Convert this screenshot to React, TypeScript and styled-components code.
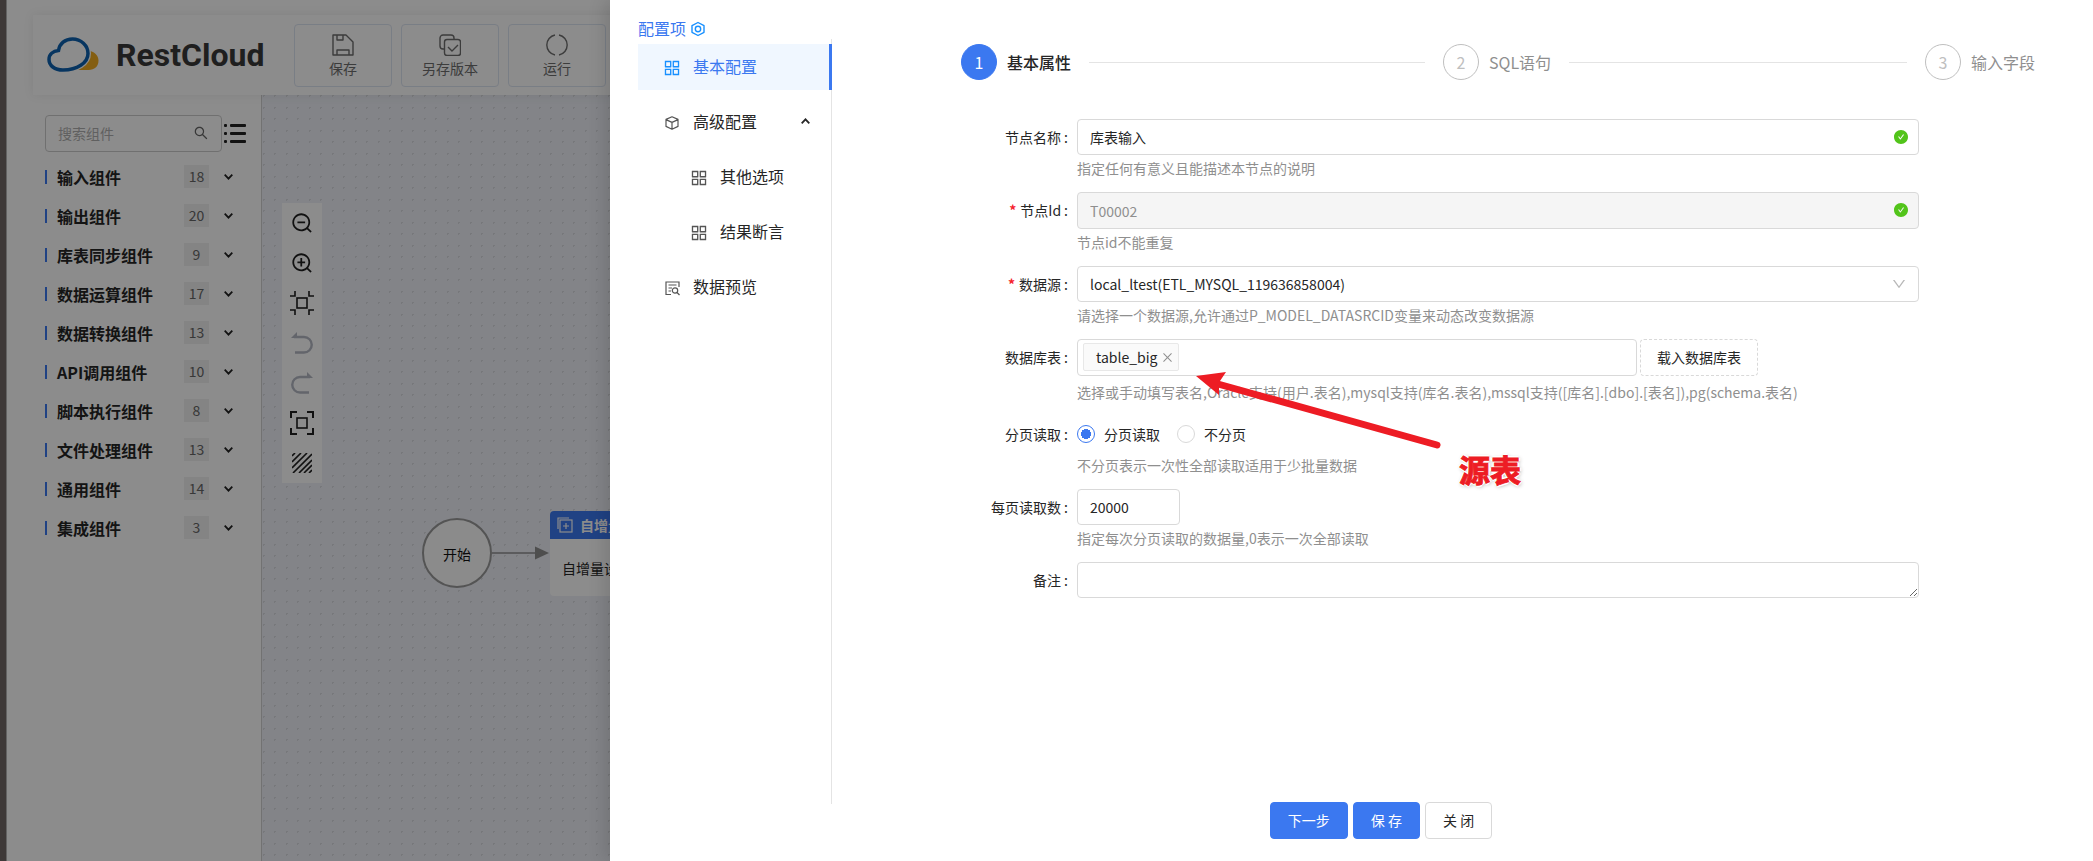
import React from "react";
import styled, { createGlobalStyle, css } from "styled-components";
import {
  AiFillCheckCircle,
  AiOutlineAppstore,
  AiOutlineClose,
  AiOutlineDown,
  AiOutlineSearch,
  AiOutlineZoomIn,
  AiOutlineZoomOut,
} from "react-icons/ai";

const primary = "#3b78f0";
const border = "#d9d9d9";
const text = "#262626";
const muted = "#8f8f8f";

const GlobalStyle = createGlobalStyle`
  *, *::before, *::after { box-sizing: border-box; }
  body {
    margin: 0;
    color: ${text};
    background: #fff;
    font-family: "Noto Sans CJK SC", "Noto Sans", sans-serif;
    font-size: 14px;
    line-height: 22px;
  }
  button, input, select, textarea { font: inherit; color: inherit; margin: 0; }
  button { cursor: pointer; }
  svg { display: block; flex: none; }
`;

/* ---------- Editor behind the drawer ---------- */

const Screen = styled.div`
  position: relative;
  display: flex;
  height: 100vh;
  overflow: hidden;
`;

const Edge = styled.div`
  flex: none;
  width: 6px;
  background: #716866;
`;

const Editor = styled.div`
  flex: 1;
  min-width: 0;
  display: flex;
  flex-direction: column;
  padding-top: 15px;
  border-left: 1px solid #b4b4b4;
  isolation: isolate;
`;

const Header = styled.header`
  position: relative;
  z-index: 1;
  display: flex;
  align-items: center;
  height: 80px;
  margin-left: 26px;
  padding-left: 14px;
  background: #fff;
  box-shadow: 0 0 10px rgba(0, 0, 0, 0.08);
`;

const Brand = styled.div`
  display: flex;
  align-items: center;
  gap: 17px;
  width: 247px;
  color: #3a3a3a;
  font: bold 32px/40px Roboto, "Noto Sans", sans-serif;
`;

const HeaderActions = styled.div`
  display: flex;
  gap: 9px;
`;

const HeaderButton = styled.button`
  display: flex;
  flex-direction: column;
  align-items: center;
  gap: 1px;
  width: 98px;
  height: 63px;
  padding: 9px 0 0;
  color: #6e6e6e;
  background: #fff;
  border: 1px solid #dde5f2;
  border-radius: 4px;
`;

const Workspace = styled.div`
  flex: 1;
  min-height: 0;
  display: flex;
`;

const Palette = styled.aside`
  flex: none;
  width: 255px;
  padding: 20px 15px 0 38px;
  border-right: 1px solid #d0d0d0;
`;

const SearchRow = styled.div`
  display: flex;
  align-items: center;
  gap: 2px;
  margin-bottom: 5px;
`;

const SearchBox = styled.label`
  display: flex;
  align-items: center;
  width: 177px;
  height: 37px;
  padding: 0 12px 2px;
  color: #666;
  border: 1px solid #ccc;
  border-radius: 4px;
`;

const SearchInput = styled.input`
  flex: 1;
  min-width: 0;
  padding: 0;
  border: 0;
  outline: 0;
  background: none;
  &::placeholder { color: #b0b0b0; opacity: 1; }
`;

const IconButton = styled.button`
  display: flex;
  padding: 0;
  color: #222;
  background: none;
  border: 0;
`;

const Groups = styled.ul`
  margin: 0;
  padding: 0 13px 0 0;
  list-style: none;
`;

const Group = styled.li`
  display: flex;
  align-items: center;
  height: 39px;
  font-size: 16px;
  font-weight: bold;
  &::before {
    content: "";
    width: 2px;
    height: 14px;
    margin-right: 10px;
    background: ${primary};
  }
`;

const GroupName = styled.span`
  flex: 1;
`;

const Count = styled.span`
  width: 25px;
  height: 23px;
  margin-right: 15px;
  color: #666;
  background: #f0f0f0;
  font-size: 14px;
  font-weight: normal;
  line-height: 23px;
  text-align: center;
`;

const Canvas = styled.div`
  position: relative;
  flex: 1;
  overflow: hidden;
  background-color: #eef0f7;
  background-image: radial-gradient(circle, #d9dbe0 1px, transparent 1px),
    radial-gradient(circle, #d9dbe0 1px, transparent 1px),
    radial-gradient(circle, #d9dbe0 1px, transparent 1px),
    radial-gradient(circle, #d9dbe0 1px, transparent 1px);
  background-size: 23px 23px;
  background-position: -10px 1px, 1px 1px, -10px 12px, 1px 12px;
`;

const Tools = styled.div`
  position: absolute;
  left: 20px;
  top: 108px;
  display: flex;
  flex-direction: column;
  width: 40px;
  background: #fff;
`;

const Tool = styled.button<{ $off?: boolean }>`
  display: flex;
  align-items: center;
  justify-content: center;
  height: 40px;
  padding: 0;
  color: ${(p) => (p.$off ? "#b4b8c4" : "#1f1f1f")};
  background: none;
  border: 0;
`;

const StartNode = styled.div`
  position: absolute;
  left: 160px;
  top: 423px;
  width: 70px;
  height: 70px;
  color: #111;
  background: #fdfdfd;
  border: 2px solid #999;
  border-radius: 50%;
  line-height: 68px;
  text-align: center;
`;

const Connector = styled.svg`
  position: absolute;
  left: 230px;
  top: 450px;
`;

const TaskNode = styled.div`
  position: absolute;
  left: 288px;
  top: 416px;
  width: 190px;
  background: #fff;
  border-radius: 4px;
  overflow: hidden;
`;

const TaskTitle = styled.div`
  display: flex;
  align-items: center;
  gap: 7px;
  height: 28px;
  padding-left: 7px;
  color: #fff;
  background: ${primary};
  font-weight: bold;
`;

const TaskText = styled.div`
  padding: 18px 12px 17px;
`;

const Mask = styled.div`
  position: absolute;
  inset: 0;
  background: rgba(0, 0, 0, 0.45);
`;

/* ---------- Drawer ---------- */

const Drawer = styled.section`
  position: absolute;
  inset: 0 0 0 610px;
  display: flex;
  background: #fff;
  box-shadow: -6px 0 16px rgba(0, 0, 0, 0.12);
`;

const Side = styled.nav`
  flex: none;
  display: flex;
  flex-direction: column;
  width: 222px;
  padding: 16px 0 57px 28px;
`;

const SideTitle = styled.div`
  display: flex;
  align-items: center;
  gap: 5px;
  height: 23px;
  color: ${primary};
  font-size: 16px;
`;

const Menu = styled.div`
  flex: 1;
  display: flex;
  flex-direction: column;
  gap: 9px;
  padding-top: 5px;
  border-right: 1px solid #e4e4e4;
`;

const MenuItem = styled.button<{ $active?: boolean; $sub?: boolean }>`
  display: flex;
  align-items: center;
  gap: 11px;
  height: 46px;
  margin-right: -1px;
  padding: 0 22px 2px ${(p) => (p.$sub ? 51 : 24)}px;
  background: none;
  border: 0;
  font-size: 16px;
  text-align: left;
  ${(p) =>
    p.$active &&
    css`
      color: ${primary};
      background: #f0f7ff;
      box-shadow: inset -3px 0 ${primary};
    `}
`;

const MenuIcon = styled.span<{ $active?: boolean }>`
  display: flex;
  justify-content: center;
  width: 20px;
  padding-top: 4px;
  color: ${(p) => (p.$active ? "#1890ff" : "#555")};
`;

const MenuLabel = styled.span`
  flex: 1;
`;

const Main = styled.main`
  position: relative;
  flex: 1;
  min-width: 0;
  display: flex;
  flex-direction: column;
  padding: 44px 0 22px;
`;

const Steps = styled.ol`
  display: flex;
  gap: 18px;
  margin: 0 58px 39px 129px;
  padding: 0;
  list-style: none;
`;

const Step = styled.li<{ $active?: boolean }>`
  display: flex;
  align-items: center;
  color: ${(p) => (p.$active ? text : muted)};
  font-size: 16px;
  font-weight: ${(p) => (p.$active ? 500 : 400)};
  &:not(:last-child) { flex: 1; }
  &:not(:last-child)::after {
    content: "";
    flex: 1;
    height: 1px;
    margin-left: 18px;
    background: #e4e4e4;
  }
`;

const StepNumber = styled.span<{ $active?: boolean }>`
  width: 36px;
  height: 36px;
  margin-right: 10px;
  border: 1px solid ${(p) => (p.$active ? primary : "#bfbfbf")};
  border-radius: 50%;
  color: ${(p) => (p.$active ? "#fff" : "#bfbfbf")};
  background: ${(p) => (p.$active ? primary : "#fff")};
  font-weight: normal;
  line-height: 34px;
  text-align: center;
`;

const Form = styled.form`
  flex: 1;
  display: flex;
  flex-direction: column;
  gap: 13px;
  padding: 0 174px 0 0;
`;

const Field = styled.div`
  display: grid;
  grid-template-columns: 238px 1fr;
  column-gap: 7px;
`;

const labelStyle = css`
  line-height: 36px;
  text-align: right;
  &::after { content: ":"; margin: 0 2px 0 3px; }
`;

const Label = styled.label<{ $required?: boolean }>`
  ${labelStyle}
  ${(p) =>
    p.$required &&
    css`
      &::before {
        content: "*";
        margin-right: 4px;
        color: #f5222d;
        font-weight: bold;
      }
    `}
`;

const GroupLabel = styled.span`
  ${labelStyle}
`;

const Control = styled.div<{ $height?: number }>`
  position: relative;
  display: flex;
  align-items: flex-start;
  gap: 3px;
  height: ${(p) => p.$height ?? 36}px;
`;

const Hint = styled.div`
  margin-top: 2px;
  color: ${muted};
`;

const boxStyle = css`
  height: 36px;
  padding: 0 12px;
  background: #fff;
  border: 1px solid ${border};
  border-radius: 4px;
  outline: 0;
`;

const TextInput = styled.input<{ $short?: boolean }>`
  ${boxStyle}
  width: ${(p) => (p.$short ? "103px" : "100%")};
  &:disabled { height: 37px; color: ${muted}; background: #f5f5f5; }
`;

const Select = styled.select`
  ${boxStyle}
  width: 100%;
  appearance: none;
`;

const Remark = styled.textarea`
  ${boxStyle}
  width: 100%;
  padding: 6px 12px;
  resize: vertical;
`;

const Suffix = styled.span<{ $ok?: boolean }>`
  position: absolute;
  right: ${(p) => (p.$ok ? 10 : 12)}px;
  top: 10px;
  color: ${(p) => (p.$ok ? "#52c41a" : "#b8b8b8")};
  pointer-events: none;
`;

const TagBox = styled.div`
  ${boxStyle}
  flex: 1;
  display: flex;
  align-items: center;
  height: 37px;
  padding: 0 5px 1px;
`;

const Tag = styled.span`
  display: flex;
  align-items: center;
  gap: 4px;
  height: 28px;
  padding: 0 4px 0 12px;
  background: #fafafa;
  border: 1px solid #e8e8e8;
  border-radius: 2px;
`;

const TagRemove = styled.button`
  display: flex;
  padding: 0;
  color: ${muted};
  background: none;
  border: 0;
`;

const TagInput = styled.input`
  flex: 1;
  min-width: 0;
  border: 0;
  outline: 0;
`;

const LoadButton = styled.button`
  flex: none;
  width: 118px;
  height: 37px;
  margin-right: 161px;
  padding: 0 0 2px;
  background: #fff;
  border: 1px dashed ${border};
  border-radius: 4px;
`;

const RadioLabel = styled.label`
  display: flex;
  align-items: center;
  gap: 9px;
  height: 36px;
  margin-right: 14px;
`;

const Radio = styled.input`
  appearance: none;
  width: 18px;
  height: 18px;
  background: #fff;
  border: 1px solid ${border};
  border-radius: 50%;
  &:checked {
    border-color: ${primary};
    background: radial-gradient(circle, ${primary} 5px, #fff 5px);
  }
`;

const Footer = styled.footer`
  display: flex;
  justify-content: center;
  gap: 5px;
  padding-right: 163px;
`;

const Button = styled.button<{ $primary?: boolean }>`
  height: 37px;
  padding: 0 17px 2px;
  color: ${(p) => (p.$primary ? "#fff" : text)};
  background: ${(p) => (p.$primary ? primary : "#fff")};
  border: 1px solid ${(p) => (p.$primary ? primary : border)};
  border-radius: 4px;
`;

const Arrow = styled.svg`
  position: absolute;
  left: 362px;
  top: 368px;
  pointer-events: none;
`;

const Callout = styled.strong`
  position: absolute;
  left: 627px;
  top: 449px;
  color: #ed1c24;
  font-size: 31px;
  line-height: 40px;
  -webkit-text-stroke: 1px #ed1c24;
  text-shadow: 2px 0 0 #fff, -2px 0 0 #fff, 0 2px 0 #fff, 0 -2px 0 #fff,
    1px 1px 4px #888;
`;

/* ---------- Icons ---------- */

const stroke = { fill: "none", stroke: "currentColor" } as const;

const LogoMark = () => (
  <svg width="52" height="36" viewBox="0 0 52 36">
    <path d="M43 14c5 1 8.500 5 8.500 9.500 0 6-4 9.500-10 9.500H27c9-3 15-9 16-19z" fill="#f0ab20" />
    <path
      d="M16 33C7.500 33 2 28.500 2 22.500c0-5 4-8.500 9.500-9C12.500 6.500 18 2 25.500 2 34 2 41 8.500 41 16.500 41 26 30 33 16 33z"
      fill="#fff"
      stroke="#fff"
      strokeWidth="6"
    />
    <path
      d="M16 33C7.500 33 2 28.500 2 22.500c0-5 4-8.500 9.500-9C12.500 6.500 18 2 25.500 2 34 2 41 8.500 41 16.500 41 26 30 33 16 33z"
      fill="#fff"
      stroke="#0e62b0"
      strokeWidth="3.500"
    />
  </svg>
);

const SaveIcon = () => (
  <svg width="22" height="22" viewBox="0 0 22 22" {...stroke} strokeWidth="1.400">
    <path d="M1 1h13l7 7v13H1zM5 1v5h6V1M5 21v-5h12v5" strokeLinejoin="round" />
  </svg>
);

const CopyCheckIcon = () => (
  <svg width="22" height="22" viewBox="0 0 22 22" {...stroke} strokeWidth="1.400">
    <path d="M5 15H4a3 3 0 0 1-3-3V4a3 3 0 0 1 3-3h8a3 3 0 0 1 3 3v1" />
    <rect x="5.500" y="5.500" width="16" height="16" rx="2.500" />
    <path d="M9 13l4 4 6-6" />
  </svg>
);

const RunIcon = () => (
  <svg width="22" height="22" viewBox="0 0 22 22" {...stroke} strokeWidth="1.400">
    <path d="M9 1a10.200 10.200 0 0 0 0 20M13 1a10.200 10.200 0 0 1 0 20" />
  </svg>
);

const ListIcon = () => (
  <svg width="22" height="20" viewBox="0 0 22 20" fill="currentColor">
    {[0, 8, 16].map((y) => (
      <React.Fragment key={y}>
        <rect x="0" y={y} width="3" height="3" rx="1" />
        <rect x="6" y={y} width="16" height="3" rx="1" />
      </React.Fragment>
    ))}
  </svg>
);

const Chevron = ({ up }: { up?: boolean }) => (
  <svg width="9" height="6" viewBox="0 0 9 6" {...stroke} strokeWidth="1.800">
    <path d={up ? "M.7 5.300l3.800-4 3.800 4" : "M.7.7l3.800 4 3.800-4"} />
  </svg>
);

const ShrinkIcon = () => (
  <svg width="24" height="24" viewBox="0 0 24 24" {...stroke} strokeWidth="1.600">
    <rect x="7" y="7" width="10" height="10" />
    <path d="M0 5h5V0M19 0v5h5M0 19h5v5M19 24v-5h5" />
  </svg>
);

const FitIcon = () => (
  <svg width="24" height="24" viewBox="0 0 24 24" {...stroke} strokeWidth="2">
    <rect x="7" y="7" width="10" height="10" strokeWidth="1.600" />
    <path d="M1 7V1h6M17 1h6v6M23 17v6h-6M7 23H1v-6" />
  </svg>
);

const UndoIcon = ({ flip }: { flip?: boolean }) => (
  <svg width="22" height="22" viewBox="0 0 22 22">
    <g transform={flip ? "translate(22 0) scale(-1 1)" : undefined}>
      <path d="M0 6l6-6v6z" fill="currentColor" />
      <path d="M3 5h10a7.700 7.700 0 0 1 0 15.500H4" fill="none" stroke="currentColor" strokeWidth="2.400" />
    </g>
  </svg>
);

const HatchIcon = () => (
  <svg width="20" height="20" viewBox="0 0 20 20" {...stroke} strokeWidth="1.600">
    <path d="M0 3l3-3M0 9l9-9M0 15L15 0M1 20L20 1M7 20L20 7M12 20l8-8M17 20l3-3" />
  </svg>
);

const StackPlusIcon = () => (
  <svg width="16" height="16" viewBox="0 0 16 16" {...stroke} strokeWidth="1.200">
    <path d="M1 12V1h11M6 9h6M9 6v6" />
    <rect x="3" y="3" width="12" height="12" />
  </svg>
);

const HexIcon = () => (
  <svg width="14" height="18" viewBox="0 0 14 18" fill="none" stroke="#1890ff" strokeWidth="1.400">
    <path d="M7 3.500l6 3.200v6.600l-6 3.200-6-3.200V6.700z" strokeLinejoin="round" />
    <circle cx="7" cy="10" r="2.700" />
  </svg>
);

const CubeIcon = () => (
  <svg width="14" height="14" viewBox="0 0 14 14" {...stroke} strokeWidth="1.200">
    <path d="M7 .8l6 2.600v7L7 13.200l-6-2.800v-7zM1 3.600l6 2.800 6-2.800M7 6.400v6.800" strokeLinejoin="round" />
  </svg>
);

const PreviewIcon = () => (
  <svg width="15" height="15" viewBox="0 0 15 15" {...stroke} strokeWidth="1.200">
    <path d="M6 13.500H1V1h13v5M3.500 4h8M3.500 7H7M3.500 10H6" />
    <circle cx="10" cy="9.500" r="2.700" />
    <path d="M12 11.500l2.500 2.500" />
  </svg>
);

/* ---------- Data ---------- */

const groups: [string, number][] = [
  ["输入组件", 18],
  ["输出组件", 20],
  ["库表同步组件", 9],
  ["数据运算组件", 17],
  ["数据转换组件", 13],
  ["API调用组件", 10],
  ["脚本执行组件", 8],
  ["文件处理组件", 13],
  ["通用组件", 14],
  ["集成组件", 3],
];

const tools = [
  { name: "缩小", icon: <AiOutlineZoomOut size={24} /> },
  { name: "放大", icon: <AiOutlineZoomIn size={24} /> },
  { name: "原始大小", icon: <ShrinkIcon /> },
  { name: "撤销", icon: <UndoIcon />, off: true },
  { name: "重做", icon: <UndoIcon flip />, off: true },
  { name: "适应画布", icon: <FitIcon /> },
  { name: "背景", icon: <HatchIcon /> },
];

const steps = ["基本属性", "SQL语句", "输入字段"];

export default function App() {
  return (
    <>
      <GlobalStyle />
      <Screen>
        <Edge />
        <Editor>
          <Header>
            <Brand>
              <LogoMark />
              RestCloud
            </Brand>
            <HeaderActions>
              <HeaderButton><SaveIcon />保存</HeaderButton>
              <HeaderButton><CopyCheckIcon />另存版本</HeaderButton>
              <HeaderButton><RunIcon />运行</HeaderButton>
            </HeaderActions>
          </Header>
          <Workspace>
            <Palette>
              <SearchRow>
                <SearchBox>
                  <SearchInput placeholder="搜索组件" aria-label="搜索组件" />
                  <AiOutlineSearch size={16} />
                </SearchBox>
                <IconButton aria-label="列表"><ListIcon /></IconButton>
              </SearchRow>
              <Groups>
                {groups.map(([name, count]) => (
                  <Group key={name}>
                    <GroupName>{name}</GroupName>
                    <Count>{count}</Count>
                    <IconButton aria-label={`展开${name}`}><Chevron /></IconButton>
                  </Group>
                ))}
              </Groups>
            </Palette>
            <Canvas>
              <Tools>
                {tools.map((t) => (
                  <Tool key={t.name} aria-label={t.name} $off={t.off}>{t.icon}</Tool>
                ))}
              </Tools>
              <StartNode>开始</StartNode>
              <Connector width="58" height="16" viewBox="0 0 58 16">
                <path d="M0 8h44" stroke="#8f8f8f" strokeWidth="1.500" />
                <path d="M43 1.500l14 6.500-14 6.500z" fill="#8f8f8f" />
              </Connector>
              <TaskNode>
                <TaskTitle><StackPlusIcon />自增量</TaskTitle>
                <TaskText>自增量设置</TaskText>
              </TaskNode>
            </Canvas>
          </Workspace>
        </Editor>
        <Mask />
        <Drawer>
          <Side>
            <SideTitle>配置项<HexIcon /></SideTitle>
            <Menu>
              <MenuItem $active>
                <MenuIcon $active><AiOutlineAppstore size={20} /></MenuIcon>
                <MenuLabel>基本配置</MenuLabel>
              </MenuItem>
              <MenuItem>
                <MenuIcon><CubeIcon /></MenuIcon>
                <MenuLabel>高级配置</MenuLabel>
                <Chevron up />
              </MenuItem>
              <MenuItem $sub>
                <MenuIcon><AiOutlineAppstore size={20} /></MenuIcon>
                <MenuLabel>其他选项</MenuLabel>
              </MenuItem>
              <MenuItem $sub>
                <MenuIcon><AiOutlineAppstore size={20} /></MenuIcon>
                <MenuLabel>结果断言</MenuLabel>
              </MenuItem>
              <MenuItem>
                <MenuIcon><PreviewIcon /></MenuIcon>
                <MenuLabel>数据预览</MenuLabel>
              </MenuItem>
            </Menu>
          </Side>
          <Main>
            <Steps>
              {steps.map((name, i) => (
                <Step key={name} $active={i === 0}>
                  <StepNumber $active={i === 0}>{i + 1}</StepNumber>
                  {name}
                </Step>
              ))}
            </Steps>
            <Form onSubmit={(e) => e.preventDefault()}>
              <Field>
                <Label htmlFor="name">节点名称</Label>
                <div>
                  <Control>
                    <TextInput id="name" defaultValue="库表输入" />
                    <Suffix $ok><AiFillCheckCircle size={16} /></Suffix>
                  </Control>
                  <Hint>指定任何有意义且能描述本节点的说明</Hint>
                </div>
              </Field>
              <Field>
                <Label htmlFor="node-id" $required>节点Id</Label>
                <div>
                  <Control $height={37}>
                    <TextInput id="node-id" defaultValue="T00002" disabled />
                    <Suffix $ok><AiFillCheckCircle size={16} /></Suffix>
                  </Control>
                  <Hint>节点id不能重复</Hint>
                </div>
              </Field>
              <Field>
                <Label htmlFor="source" $required>数据源</Label>
                <div>
                  <Control>
                    <Select id="source">
                      <option>local_ltest(ETL_MYSQL_119636858004)</option>
                    </Select>
                    <Suffix><AiOutlineDown size={16} /></Suffix>
                  </Control>
                  <Hint>请选择一个数据源,允许通过P_MODEL_DATASRCID变量来动态改变数据源</Hint>
                </div>
              </Field>
              <Field>
                <Label htmlFor="tables">数据库表</Label>
                <div>
                  <Control $height={40}>
                    <TagBox>
                      <Tag>
                        table_big
                        <TagRemove type="button" aria-label="移除"><AiOutlineClose size={13} /></TagRemove>
                      </Tag>
                      <TagInput id="tables" />
                    </TagBox>
                    <LoadButton type="button">载入数据库表</LoadButton>
                  </Control>
                  <Hint>选择或手动填写表名,Oracle支持(用户.表名),mysql支持(库名.表名),mssql支持([库名].[dbo].[表名]),pg(schema.表名)</Hint>
                </div>
              </Field>
              <Field role="radiogroup" aria-labelledby="paging">
                <GroupLabel id="paging">分页读取</GroupLabel>
                <div>
                  <Control>
                    <RadioLabel><Radio type="radio" name="paging" defaultChecked />分页读取</RadioLabel>
                    <RadioLabel><Radio type="radio" name="paging" />不分页</RadioLabel>
                  </Control>
                  <Hint>不分页表示一次性全部读取适用于少批量数据</Hint>
                </div>
              </Field>
              <Field>
                <Label htmlFor="size">每页读取数</Label>
                <div>
                  <Control><TextInput id="size" defaultValue="20000" $short /></Control>
                  <Hint>指定每次分页读取的数据量,0表示一次全部读取</Hint>
                </div>
              </Field>
              <Field>
                <Label htmlFor="remark">备注</Label>
                <Control><Remark id="remark" /></Control>
              </Field>
            </Form>
            <Footer>
              <Button $primary>下一步</Button>
              <Button $primary>保 存</Button>
              <Button>关 闭</Button>
            </Footer>
            <Arrow width="250" height="84" viewBox="0 0 250 84">
              <path d="M24 16L243 77" stroke="#ed1c24" strokeWidth="7" strokeLinecap="round" />
              <path d="M2 8l30-4-6 9-1 6 0 8z" fill="#ed1c24" />
            </Arrow>
            <Callout>源表</Callout>
          </Main>
        </Drawer>
      </Screen>
    </>
  );
}
